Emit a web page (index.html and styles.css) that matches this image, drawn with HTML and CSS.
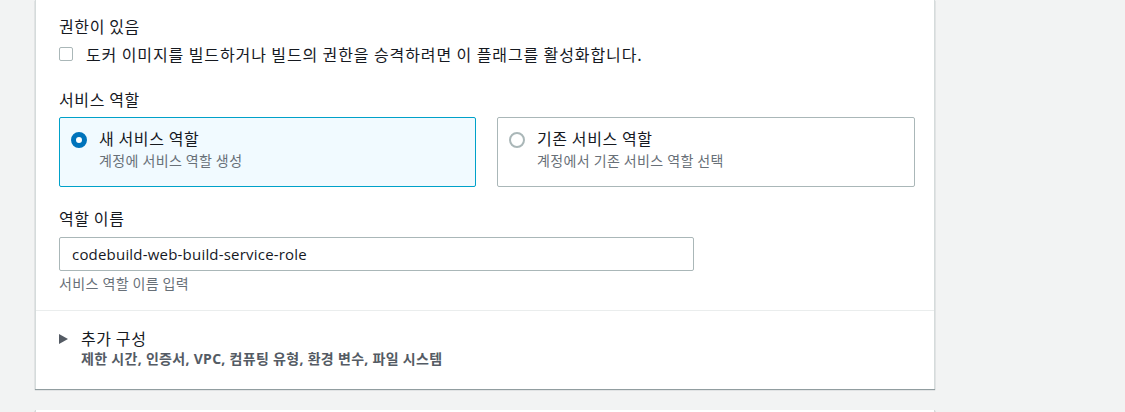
FILE: index.html
```html
<!DOCTYPE html>
<html>
	<head>
		<meta charset="UTF-8">
		<title>빌드 프로젝트</title>
		<link rel="stylesheet" href="styles.css">
	</head>
	<body>
		<div class="page">
			<div class="card">
				<div class="card-body">
					<div class="field">
						<div class="label">권한이 있음</div>
						<label class="check">
							<span class="box"></span>
							<span class="check-text">도커 이미지를 빌드하거나 빌드의 권한을 승격하려면 이 플래그를 활성화합니다.</span>
						</label>
					</div>

					<div class="field role-field">
						<div class="label">서비스 역할</div>
						<div class="tiles">
							<div class="tile selected">
								<span class="radio"></span>
								<div>
									<div class="tile-title">새 서비스 역할</div>
									<div class="tile-desc">계정에 서비스 역할 생성</div>
								</div>
							</div>
							<div class="tile">
								<span class="radio"></span>
								<div>
									<div class="tile-title">기존 서비스 역할</div>
									<div class="tile-desc">계정에서 기존 서비스 역할 선택</div>
								</div>
							</div>
						</div>
					</div>

					<div class="field">
						<div class="label">역할 이름</div>
						<input class="input" type="text" value="codebuild-web-build-service-role">
						<div class="hint">서비스 역할 이름 입력</div>
					</div>
				</div>

				<div class="expand">
					<span class="caret"></span>
					<div>
						<div class="expand-title">추가 구성</div>
						<div class="expand-desc">제한 시간, 인증서, VPC, 컴퓨팅 유형, 환경 변수, 파일 시스템</div>
					</div>
				</div>
			</div>

			<div class="card next"></div>
		</div>
	</body>
</html>
```

FILE: styles.css
```css
* {
	margin: 0;
	padding: 0;
	box-sizing: border-box;
}

body {
	background: #f2f3f3;
	font-family: "Noto Sans CJK KR", sans-serif;
	color: #16191f;
	font-size: 16px;
	letter-spacing: 0.6px;
	overflow: hidden;
	height: 412px;
}

.page {
	padding-left: 35px;
	width: 935px;
}

.card {
	background: #fff;
	border-left: 1px solid #d5dbdb;
	border-right: 1px solid #d5dbdb;
	box-shadow: 0 1px 1px 0 rgba(0, 28, 36, .4);
}

.card-body {
	padding: 15px 23px 18px 23px;
	border-bottom: 1px solid #eaeded;
}

.field {
	margin-bottom: 23px;
}

.field.role-field {
	margin-bottom: 20px;
}

.field:last-child {
	margin-bottom: 0;
}

.label {
	line-height: 22px;
	margin-bottom: 6px;
}

.check {
	display: flex;
	align-items: center;
	gap: 13px;
	line-height: 22px;
}

.check-text {
	letter-spacing: 0.9px;
}

.box {
	width: 14px;
	height: 14px;
	border: 1px solid #aab7b8;
	border-radius: 2px;
	flex: none;
}

.tiles {
	display: grid;
	grid-template-columns: 417px 418px;
	gap: 21px;
	padding-top: 1px;
}

.tile {
	display: flex;
	gap: 12px;
	height: 70px;
	padding: 9px 11px;
	border: 1px solid #aab7b8;
	border-radius: 2px;
}

.tile.selected {
	border-color: #00a1c9;
	background: #f1faff;
}

.radio {
	width: 16px;
	height: 16px;
	margin-top: 5px;
	border: 2px solid #aab7b8;
	border-radius: 50%;
	background: #fff;
	flex: none;
}

.tile.selected .radio {
	border: 5px solid #0073bb;
}

.tile-title {
	line-height: 22px;
}

.tile-desc {
	line-height: 22px;
}

.tile-desc,
.hint {
	font-size: 14px;
	letter-spacing: 0.4px;
	color: #687078;
}

.hint {
	line-height: 18px;
	margin-top: 3px;
}

.input {
	display: block;
	width: 635px;
	height: 34px;
	margin-top: 8px;
	padding: 0 12px;
	border: 1px solid #aab7b8;
	border-radius: 2px;
	font-family: "Open Sans", sans-serif;
	font-size: 15px;
	letter-spacing: 0.2px;
	color: #16191f;
	outline: none;
}

.expand {
	display: flex;
	gap: 13px;
	padding: 16px 23px 20px 23px;
}

.caret {
	width: 0;
	height: 0;
	margin-top: 7px;
	border-top: 5px solid transparent;
	border-bottom: 5px solid transparent;
	border-left: 9px solid #545b64;
	flex: none;
}

.expand-title {
	line-height: 22px;
	color: #16191f;
}

.expand-desc {
	font-family: "Open Sans", "Noto Sans CJK KR", sans-serif;
	font-size: 14px;
	font-weight: bold;
	letter-spacing: 0.3px;
	line-height: 20px;
	color: #545b64;
}

.card.next {
	margin-top: 21px;
	height: 20px;
}
```
